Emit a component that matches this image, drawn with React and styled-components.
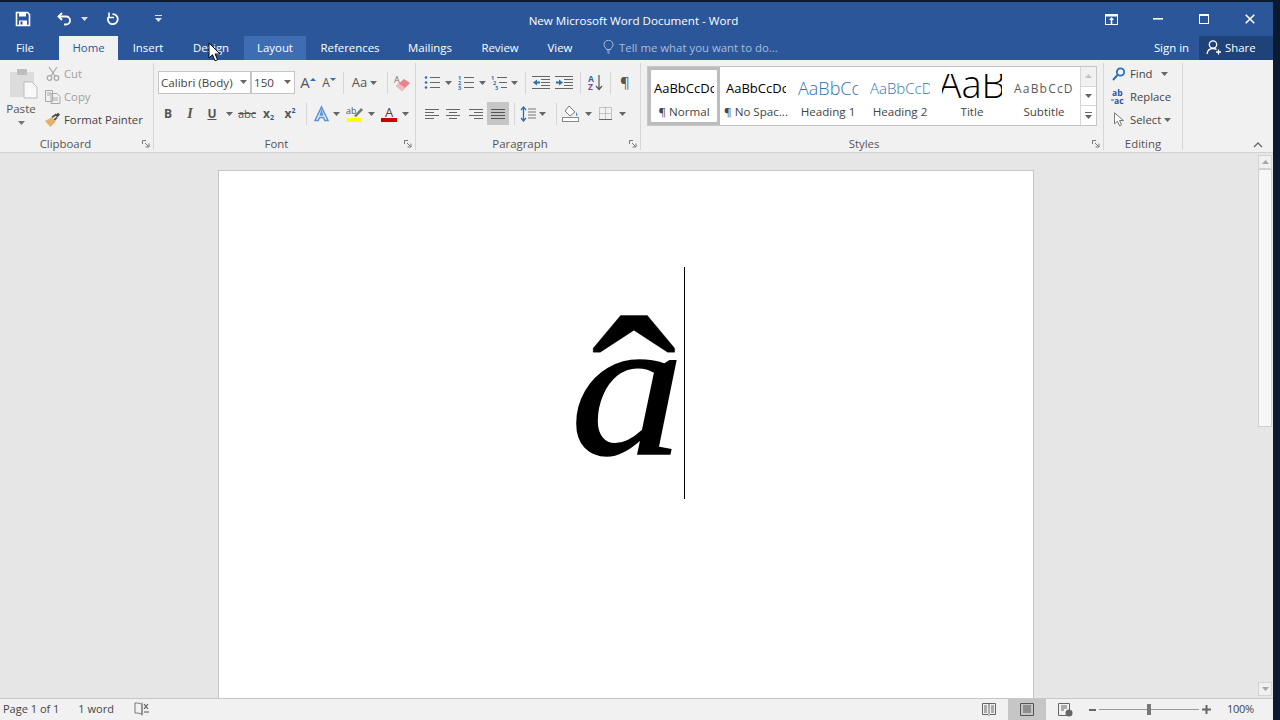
import React from "react";
import styled, { createGlobalStyle } from "styled-components";

const Global = createGlobalStyle`
  html, body { margin: 0; padding: 0; height: 100%; background: #0b1a30; overflow: hidden; }
  body { font-family: "Open Sans", "Liberation Sans", sans-serif; }
`;

const Frame = styled.div`
  position: relative;
  width: 1273px;
  height: 720px;
  padding-top: 2px;
  box-sizing: border-box;
  display: flex;
  flex-direction: column;
`;

const TitleBar = styled.div`
  height: 34px;
  flex: none;
  background: #2b579a;
  display: flex;
  align-items: center;
  color: #fff;
`;

const QuickCell = styled.div`
  width: ${(p) => p.$w}px;
  margin-left: ${(p) => p.$ml || 0}px;
  display: flex;
  justify-content: center;
  align-items: center;
  height: 32px;
`;

const Title = styled.div`
  position: absolute;
  left: 0;
  width: 1267px;
  top: 13px;
  text-align: center;
  font-size: 11.6px;
  line-height: 16px;
  color: #fff;
`;

const WinControls = styled.div`
  margin-left: auto;
  display: flex;
  align-items: center;
`;

const TabBar = styled.div`
  height: 24px;
  flex: none;
  background: #2b579a;
  display: flex;
  align-items: stretch;
  font-size: 11.4px;
  color: #fff;
`;

const Tab = styled.div`
  width: ${(p) => p.$w}px;
  flex: none;
  display: flex;
  justify-content: center;
  align-items: center;
  padding-bottom: 2px;
  box-sizing: border-box;
  background: ${(p) => (p.$active ? "#f1f1f1" : p.$hover ? "#3e6db4" : "transparent")};
  color: ${(p) => (p.$active ? "#2b579a" : "#fff")};
`;

const TellMe = styled.div`
  margin-left: 17px;
  padding-bottom: 2px;
  display: flex;
  align-items: center;
  gap: 5px;
  color: #a9bdd9;
`;

const SignIn = styled.div`
  margin-left: auto;
  display: flex;
  align-items: center;
  padding-right: 10px;
  padding-bottom: 2px;
`;

const Share = styled.div`
  width: 74px;
  display: flex;
  align-items: center;
  gap: 3px;
  padding: 0 0 2px 7px;
  box-sizing: border-box;
  background: #1f4379;
`;

const Ribbon = styled.div`
  height: 93px;
  flex: none;
  box-sizing: border-box;
  background: #f1f1f1;
  border-bottom: 1px solid #d2d2d2;
  padding-top: 3px;
  display: flex;
  align-items: flex-start;
  font-size: 11.3px;
  color: #444;
`;

const Group = styled.section`
  width: ${(p) => p.$w}px;
  height: 87px;
  flex: none;
  box-sizing: border-box;
  border-right: 1px solid #d6d6d6;
  display: flex;
  flex-direction: column;
`;

const GroupBody = styled.div`
  height: 74px;
  flex: none;
  box-sizing: border-box;
  padding: ${(p) => p.$pad || "0"};
  display: ${(p) => (p.$row ? "flex" : "block")};
`;

const GroupFoot = styled.div`
  height: 13px;
  display: flex;
  align-items: center;
  color: #555;
  font-size: 11.4px;
  line-height: 13px;
`;

const GroupLabel = styled.span`
  flex: 1;
  text-align: center;
  padding-right: ${(p) => p.$pr || 0}px;
`;

const Launcher = styled.svg`
  flex: none;
  margin: 0 3px 0 5px;
`;

const ToolRow = styled.div`
  display: flex;
  align-items: center;
  height: 23px;
  margin-top: ${(p) => p.$mt || 0}px;
  margin-left: ${(p) => p.$ml || 0}px;
`;

const Tool = styled.div`
  width: ${(p) => p.$w}px;
  height: 23px;
  flex: none;
  margin-left: ${(p) => p.$ml || 0}px;
  display: flex;
  justify-content: center;
  align-items: center;
  background: ${(p) => (p.$on ? "#c6c6c6" : "transparent")};
`;

const Sep = styled.div`
  width: 1px;
  height: 22px;
  flex: none;
  background: #d6d6d6;
  margin: 0 ${(p) => p.$mr ?? 5}px 0 ${(p) => p.$ml ?? 5}px;
`;

const Combo = styled.div`
  width: ${(p) => p.$w}px;
  height: 23px;
  flex: none;
  box-sizing: border-box;
  background: #fff;
  border: 1px solid #c6c6c6;
  padding: 0 3px 1px 2px;
  display: flex;
  align-items: center;
  justify-content: space-between;
  color: #444;
  font-size: 11.6px;
`;

const GrowA = styled.span`
  font-size: ${(p) => p.$size}px;
  line-height: 1;
  color: #555;
`;

const Fmt = styled.span`
  font-size: 12px;
  font-weight: 700;
  text-decoration: ${(p) => (p.$u ? "underline" : "none")};
  color: #555;
`;

const FmtItalic = styled.span`
  font-family: "Liberation Serif", serif;
  font-size: 14px;
  font-weight: 700;
  font-style: italic;
  color: #555;
`;

const Strike = styled.span`
  font-size: 11px;
  color: #555;
  text-decoration: line-through;
`;

const Script = styled.span`
  font-size: 12px;
  font-weight: 700;
  color: #555;
  small {
    font-size: 7px;
    color: #2b579a;
    vertical-align: ${(p) => (p.$up ? "5px" : "-2px")};
  }
`;

const Paste = styled.div`
  width: 42px;
  display: flex;
  flex-direction: column;
  align-items: center;
  padding-top: 5px;
  color: #555;
  font-size: 11.6px;
  line-height: 15px;
  svg:first-child {
    margin-left: 4px;
  }
  span {
    margin-top: 2px;
  }
  svg:last-child {
    margin-top: 5px;
  }
`;

const ClipList = styled.div`
  margin: -1px 0 0 3px;
`;

const ClipRow = styled.div`
  height: 23px;
  display: flex;
  align-items: center;
  gap: 3px;
  color: ${(p) => (p.$off ? "#a0a0a0" : "#444")};
`;

const IconSlot = styled.div`
  width: 16px;
  display: flex;
  justify-content: center;
`;

const Gallery = styled.div`
  width: 450px;
  height: 60px;
  box-sizing: border-box;
  border: 1px solid #c6c6c6;
  background: #fff;
  display: flex;
`;

const StyleItem = styled.div`
  width: 72px;
  height: 58px;
  flex: none;
  box-sizing: border-box;
  border: ${(p) => (p.$sel ? "3px solid #bcbcbc" : "3px solid transparent")};
  display: flex;
  flex-direction: column;
  align-items: center;
  overflow: hidden;
  padding: 0 3px;
`;

const StyleSample = styled.div`
  height: 34px;
  width: 60px;
  flex: none;
  box-sizing: border-box;
  padding-top: 2px;
  overflow: hidden;
  white-space: nowrap;
  display: flex;
  align-items: center;
  font-size: ${(p) => p.$size}px;
  font-weight: ${(p) => p.$weight || 400};
  letter-spacing: ${(p) => p.$track || 0}px;
  color: ${(p) => p.$color || "#000"};
`;

const TitleSample = styled(StyleSample)`
  height: 30px;
  margin-top: 4px;
  padding-top: 0;
  align-items: flex-start;
  justify-content: center;
  line-height: 18px;
`;

const StyleName = styled.div`
  font-size: 11.6px;
  line-height: 15px;
  white-space: nowrap;
  color: #444;
`;

const GalleryArrows = styled.div`
  margin-left: auto;
  width: 15px;
  border-left: 1px solid #d6d6d6;
  display: flex;
  flex-direction: column;
`;

const GalleryArrow = styled.div`
  flex: 1;
  display: flex;
  justify-content: center;
  align-items: center;
  background: ${(p) => (p.$off ? "#f1f1f1" : "#fff")};
  border-top: ${(p) => (p.$first ? "0" : "1px solid #d6d6d6")};
`;

const EditList = styled.div`
  padding-left: 7px;
  margin-top: -1px;
`;

const EditRow = styled.div`
  height: 23px;
  display: flex;
  align-items: center;
  gap: 3px;
  color: #444;
`;

const Collapse = styled.div`
  align-self: flex-end;
  margin: 0 10px 4px auto;
  display: flex;
`;

const Canvas = styled.div`
  flex: 1;
  min-height: 0;
  display: flex;
  background: #e6e6e6;
  overflow: hidden;
`;

const DocArea = styled.div`
  flex: 1;
  padding: 17px 0 0 218px;
`;

const Page = styled.div`
  width: 816px;
  height: 1056px;
  box-sizing: border-box;
  background: #fff;
  border: 1px solid #c6c6c6;
  padding-top: 96px;
  text-align: center;
`;

const Line = styled.div`
  display: inline-flex;
  height: 232px;
  align-items: flex-start;
`;

const BigLetter = styled.span`
  position: relative;
  display: block;
  width: 111px;
  height: 232px;
  text-align: left;
  font-family: "Liberation Serif", serif;
  color: #000;
`;

const LetterA = styled.span`
  display: block;
  padding-left: 2px;
  font-style: italic;
  font-size: 200px;
  line-height: 240px;
  -webkit-text-stroke: 1.5px #000;
  transform: scaleX(1.14);
  transform-origin: left center;
`;

const Hat = styled.span`
  position: absolute;
  left: 25px;
  top: 14px;
  font-size: 245px;
  line-height: 245px;
  -webkit-text-stroke: 0.4px #000;
  transform: scaleX(1.05);
`;

const CaretBar = styled.span`
  display: block;
  width: 1px;
  height: 232px;
  margin-left: 5px;
  background: #000;
`;

const Scrollbar = styled.div`
  width: 16px;
  flex: none;
  box-sizing: border-box;
  padding: 2px 1px;
  display: flex;
  flex-direction: column;
  align-items: center;
`;

const ScrollBtn = styled.div`
  width: 14px;
  height: 14px;
  flex: none;
  box-sizing: border-box;
  background: #f0f0f0;
  border: 1px solid #d4d4d4;
  display: flex;
  justify-content: center;
  align-items: center;
  margin-top: ${(p) => (p.$end ? "auto" : 0)};
`;

const ScrollThumb = styled.div`
  width: 14px;
  height: 258px;
  flex: none;
  box-sizing: border-box;
  background: #f7f7f7;
  border: 1px solid #cfcfcf;
`;

const StatusBar = styled.div`
  height: 22px;
  flex: none;
  box-sizing: border-box;
  background: #f1f1f1;
  border-top: 1px solid #c6c6c6;
  display: flex;
  align-items: stretch;
  font-size: 11px;
  color: #444;
`;

const StatusText = styled.div`
  display: flex;
  align-items: center;
  padding-bottom: 2px;
  margin-left: ${(p) => p.$ml}px;
`;

const StatusRight = styled.div`
  margin-left: auto;
  display: flex;
  align-items: stretch;
`;

const ViewBtn = styled.div`
  width: 38px;
  display: flex;
  justify-content: center;
  align-items: center;
  background: ${(p) => (p.$on ? "#c6c6c6" : "transparent")};
`;

const ZoomBar = styled.div`
  display: flex;
  align-items: center;
  margin-left: 5px;
  gap: 3px;
`;

const Slider = styled.div`
  position: relative;
  width: 100px;
  height: 1px;
  background: #9a9a9a;
`;

const Knob = styled.div`
  position: absolute;
  left: 48px;
  top: -5px;
  width: 4px;
  height: 11px;
  background: #777;
`;

const ZoomPct = styled.div`
  width: 62px;
  display: flex;
  align-items: center;
  padding: 0 0 2px 16px;
  box-sizing: border-box;
  letter-spacing: -0.3px;
`;

const Pointer = styled.svg`
  position: absolute;
  left: 208px;
  top: 42px;
`;

// small icons
const DownCaret = ({ c = "#666" }) => (
  <svg width="7" height="4" viewBox="0 0 7 4"><path d="M0 0h7L3.5 4z" fill={c} /></svg>
);

const Lines = ({ rows, c = "#666" }) => (
  <svg width="16" height="11" viewBox="0 0 16 11">
    {rows.map(([x, w], i) => (
      <rect key={i} x={x} y={1 + i * 3} width={w} height="1" fill={c} />
    ))}
  </svg>
);

const ListIcon = ({ kind }) => (
  <svg width="16" height="16" viewBox="0 0 16 16">
    {[2, 7, 12].map((y, i) =>
      kind === "bullet" ? (
        <circle key={y} cx="2" cy={y + 0.5} r="1.3" fill="#2b6fb5" />
      ) : (
        <text key={y} x={kind === "multi" ? i * 2 : 0} y={y + 3} fontSize="5.5" fill="#2b6fb5" fontWeight="700">{i + 1}</text>
      )
    )}
    {[2, 7, 12].map((y, i) => (
      <rect key={y} x={kind === "multi" ? 6 + i * 2 : 6} y={y} width={kind === "multi" ? 10 - i * 2 : 10} height="1" fill="#666" />
    ))}
  </svg>
);

const IndentIcon = ({ out }) => (
  <svg width="18" height="14" viewBox="0 0 18 14">
    <rect x="0" y="0" width="18" height="1" fill="#666" />
    <rect x="9" y="3" width="9" height="1" fill="#666" />
    <rect x="9" y="6" width="9" height="1" fill="#666" />
    <rect x="9" y="9" width="9" height="1" fill="#666" />
    <rect x="0" y="12" width="18" height="1" fill="#666" />
    <path d={out ? "M1 6.5 5 3.5v2h3v2H5v2z" : "M8 6.5 4 3.5v2H1v2h3v2z"} fill="#2b6fb5" />
  </svg>
);

const Launch = () => (
  <Launcher width="8" height="8" viewBox="0 0 8 8">
    <path d="M.5 4V.5H4M3 3l3.5 3.5M7 3.5V7H3.5" stroke="#777" fill="none" />
  </Launcher>
);

const styleItems = [
  { sample: "AaBbCcDc", size: 13, name: "¶ Normal", sel: true },
  { sample: "AaBbCcDc", size: 13, name: "¶ No Spac..." },
  { sample: "AaBbCc", size: 18, name: "Heading 1", color: "#2e74b5", weight: 300 },
  { sample: "AaBbCcD", size: 15, name: "Heading 2", color: "#2e74b5", weight: 300 },
  { sample: "AaBbCcD", size: 12, name: "Subtitle", color: "#5a5a5a", track: 1.2 },
];

const tabs = [
  ["Insert", 60], ["Design", 66], ["Layout", 62, true], ["References", 88], ["Mailings", 72], ["Review", 68], ["View", 52],
];

const StyleCell = ({ s }) => (
  <StyleItem $sel={s.sel}>
    <StyleSample $size={s.size} $color={s.color} $track={s.track} $weight={s.weight}>
      {s.sample}
    </StyleSample>
    <StyleName>{s.name}</StyleName>
  </StyleItem>
);

export default function App() {
  return (
    <Frame>
      <Global />
      <TitleBar>
        <QuickCell $w={20} $ml={13}>
          <svg width="16" height="16" viewBox="0 0 16 16">
            <path d="M1.5 1.5h11l2 2v11h-13z" fill="none" stroke="#fff" strokeWidth="1.6" />
            <path d="M4 1.5h7v4H4zM4 9.5h8v5H4z" fill="#fff" />
            <rect x="5.5" y="10.5" width="2" height="3" fill="#2b579a" />
          </svg>
        </QuickCell>
        <QuickCell $w={20} $ml={22}>
          <svg width="16" height="14" viewBox="0 0 16 14">
            <path d="M5 1 1.5 4.5 5 8" fill="none" stroke="#fff" strokeWidth="1.8" />
            <path d="M2 4.5h7a4 4 0 0 1 4 4 4 4 0 0 1-4 4H7" fill="none" stroke="#fff" strokeWidth="1.8" />
          </svg>
        </QuickCell>
        <QuickCell $w={8} $ml={5}><DownCaret c="#d9e2ef" /></QuickCell>
        <QuickCell $w={20} $ml={15}>
          <svg width="14" height="14" viewBox="0 0 14 14">
            <path d="M6.5 2.2a5 5 0 1 1-4.3 3" fill="none" stroke="#fff" strokeWidth="1.8" />
            <path d="M3 .5v5h5" fill="none" stroke="#fff" strokeWidth="1.6" />
          </svg>
        </QuickCell>
        <QuickCell $w={10} $ml={30}>
          <svg width="7" height="8" viewBox="0 0 7 8">
            <rect y="0" width="7" height="1" fill="#d9e2ef" />
            <path d="M0 3h7L3.5 7z" fill="#d9e2ef" />
          </svg>
        </QuickCell>
        <Title>New Microsoft Word Document - Word</Title>
        <WinControls>
          <QuickCell $w={46} $ml={-2}>
            <svg width="13" height="11" viewBox="0 0 13 11">
              <rect x=".5" y=".5" width="12" height="10" fill="none" stroke="#fff" />
              <rect x="1" y="1" width="11" height="1.5" fill="#fff" />
              <path d="M6.5 3 9 6H7.3v4H5.7V6H4z" fill="#fff" />
            </svg>
          </QuickCell>
          <QuickCell $w={46} $ml={1}>
            <svg width="10" height="2" viewBox="0 0 10 2"><rect width="10" height="1.6" fill="#fff" /></svg>
          </QuickCell>
          <QuickCell $w={46}>
            <svg width="10" height="10" viewBox="0 0 10 10">
              <rect x=".5" y=".5" width="9" height="9" fill="none" stroke="#fff" />
              <rect width="10" height="2" fill="#fff" />
            </svg>
          </QuickCell>
          <QuickCell $w={46}>
            <svg width="10" height="10" viewBox="0 0 10 10">
              <path d="M.7.7l8.6 8.6M9.3.7.7 9.3" stroke="#fff" strokeWidth="1.6" />
            </svg>
          </QuickCell>
        </WinControls>
      </TitleBar>

      <TabBar>
        <Tab $w={50}>File</Tab>
        <Tab $w={9} />
        <Tab $w={59} $active>Home</Tab>
        {tabs.map(([label, w, hover]) => (
          <Tab key={label} $w={w} $hover={hover}>{label}</Tab>
        ))}
        <TellMe>
          <svg width="11" height="14" viewBox="0 0 11 14">
            <path d="M3.5 9.5C3 7.5 1 7 1 4.7a4.5 4.5 0 0 1 9 0C10 7 8 7.5 7.5 9.5zM4 11h3M4.5 13h2" fill="none" stroke="#a9bdd9" />
          </svg>
          Tell me what you want to do...
        </TellMe>
        <SignIn>Sign in</SignIn>
        <Share>
          <svg width="16" height="15" viewBox="0 0 16 15">
            <circle cx="7" cy="4.5" r="3.7" fill="none" stroke="#fff" strokeWidth="1.3" />
            <path d="M1 14c.5-4 3-5.5 6-5.5 1.5 0 2.5.3 3.5 1M12.5 9.5v5M10 12h5" fill="none" stroke="#fff" strokeWidth="1.3" />
          </svg>
          Share
        </Share>
      </TabBar>

      <Ribbon>
        <Group $w={154}>
          <GroupBody $row>
            <Paste>
              <svg width="32" height="31" viewBox="0 0 32 31">
                <rect x="3" y="4" width="24" height="25" fill="#dcdcdc" />
                <rect x="10" y="1" width="10" height="6" fill="#bdbdbd" />
                <path d="M17 14h8l5 5v11H17z" fill="#f8f8f8" stroke="#bdbdbd" />
              </svg>
              <span>Paste</span>
              <DownCaret c="#777" />
            </Paste>
            <ClipList>
              <ClipRow $off>
                <IconSlot>
                  <svg width="14" height="15" viewBox="0 0 14 15">
                    <path d="M3 1l6 9M11 1 5 10" stroke="#a8a8a8" strokeWidth="1.2" />
                    <circle cx="3.5" cy="12" r="2.3" fill="none" stroke="#a8a8a8" strokeWidth="1.2" />
                    <circle cx="10.5" cy="12" r="2.3" fill="none" stroke="#a8a8a8" strokeWidth="1.2" />
                  </svg>
                </IconSlot>
                Cut
              </ClipRow>
              <ClipRow $off>
                <IconSlot>
                  <svg width="16" height="14" viewBox="0 0 16 14">
                    <path d="M.5.5h7v11h-7zM6 3.5h6l3 3v7H6z" fill="#f1f1f1" stroke="#a8a8a8" />
                    <path d="M8 8h5M8 10h5M2 3h4M2 5h3" stroke="#a8a8a8" />
                  </svg>
                </IconSlot>
                Copy
              </ClipRow>
              <ClipRow>
                <IconSlot>
                  <svg width="18" height="16" viewBox="0 0 18 16">
                    <path d="M0 9l8-4 4 5-6 6z" fill="#e3b26a" />
                    <path d="M8 5l4-3 1.5 1.5M10.5 8l3-3" stroke="#555" strokeWidth="2" fill="none" />
                    <rect x="13" y="0" width="3" height="4" fill="#444" transform="rotate(40 14 2)" />
                  </svg>
                </IconSlot>
                Format Painter
              </ClipRow>
            </ClipList>
          </GroupBody>
          <GroupFoot><GroupLabel $pr={6}>Clipboard</GroupLabel><Launch /></GroupFoot>
        </Group>

        <Group $w={262}>
          <GroupBody $pad="8px 0 0 4px">
            <ToolRow>
              <Combo $w={93}>Calibri (Body)<DownCaret /></Combo>
              <Combo $w={44}>150<DownCaret /></Combo>
              <Tool $w={20} $ml={3}>
                <GrowA $size={15}>A</GrowA>
                <svg width="6" height="12" viewBox="0 0 6 12"><path d="M0 4 3 1l3 3z" fill="#2b6fb5" /></svg>
              </Tool>
              <Tool $w={20} $ml={1}>
                <GrowA $size={12}>A</GrowA>
                <svg width="6" height="12" viewBox="0 0 6 12"><path d="M0 1h6L3 4z" fill="#2b6fb5" /></svg>
              </Tool>
              <Sep $ml={4} $mr={6} />
              <Tool $w={29}>
                <GrowA $size={13}>Aa</GrowA>&nbsp;<DownCaret />
              </Tool>
              <Sep $ml={8} $mr={5} />
              <Tool $w={18}>
                <svg width="18" height="18" viewBox="0 0 18 18">
                  <path d="M3 12l8-7 6 4-8 8z" fill="#e8848f" />
                  <path d="M3 12l3-2.6 6 4.4L9 17z" fill="#f3b9bf" />
                  <text x="1" y="9" fontSize="9" fill="#777">A</text>
                </svg>
              </Tool>
            </ToolRow>
            <ToolRow $mt={8}>
              <Tool $w={20}><Fmt>B</Fmt></Tool>
              <Tool $w={24}><FmtItalic>I</FmtItalic></Tool>
              <Tool $w={20}><Fmt $u>U</Fmt></Tool>
              <Tool $w={14}><DownCaret /></Tool>
              <Tool $w={22}><Strike>abc</Strike></Tool>
              <Tool $w={21}><Script>x<small>2</small></Script></Tool>
              <Tool $w={22}><Script $up>x<small>2</small></Script></Tool>
              <Sep $ml={5} $mr={0} />
              <Tool $w={20} $ml={4}>
                <svg width="17" height="17" viewBox="0 0 17 17">
                  <path d="M8.5 2 15 15.5h-3.2l-1.300-3h-4l-1.300 3H2zM8.5 6.500 7.400 10h2.200z" fill="#eaf2fb" stroke="#5b93d3" strokeWidth="1.5" />
                </svg>
              </Tool>
              <Tool $w={10}><DownCaret /></Tool>
              <Tool $w={20} $ml={4}>
                <svg width="18" height="16" viewBox="0 0 18 16">
                  <text x="0" y="8" fontSize="9" fill="#555">ab</text>
                  <path d="M8 10l7-8 2 2-7 7z" fill="#777" />
                  <rect x="1" y="12" width="15" height="4" fill="#ffff00" />
                </svg>
              </Tool>
              <Tool $w={12}><DownCaret /></Tool>
              <Tool $w={20} $ml={2}>
                <svg width="16" height="16" viewBox="0 0 16 16">
                  <text x="8" y="11" textAnchor="middle" fontSize="13" fill="#444">A</text>
                  <rect x="0" y="12" width="16" height="4" fill="#d00000" />
                </svg>
              </Tool>
              <Tool $w={12}><DownCaret /></Tool>
            </ToolRow>
          </GroupBody>
          <GroupFoot><GroupLabel>Font</GroupLabel><Launch /></GroupFoot>
        </Group>

        <Group $w={225}>
          <GroupBody $pad="8px 0 0 7px">
            <ToolRow $ml={1}>
              <Tool $w={16}><ListIcon kind="bullet" /></Tool>
              <Tool $w={16}><DownCaret /></Tool>
              <Tool $w={19}><ListIcon kind="num" /></Tool>
              <Tool $w={14}><DownCaret /></Tool>
              <Tool $w={20}><ListIcon kind="multi" /></Tool>
              <Tool $w={10}><DownCaret /></Tool>
              <Sep $ml={6} $mr={5} />
              <Tool $w={20}><IndentIcon out /></Tool>
              <Tool $w={26}><IndentIcon /></Tool>
              <Sep $ml={3} $mr={4} />
              <Tool $w={20}>
                <svg width="15" height="17" viewBox="0 0 15 17">
                  <text x="0" y="8" fontSize="8.5" fontWeight="700" fill="#2b6fb5">A</text>
                  <text x="0" y="16" fontSize="8.5" fontWeight="700" fill="#7a4fa0">Z</text>
                  <path d="M11 1v14M8 12l3 3.5 3-3.5" stroke="#555" fill="none" strokeWidth="1.2" />
                </svg>
              </Tool>
              <Sep $ml={5} $mr={4} />
              <Tool $w={20}><GrowA $size={15}>¶</GrowA></Tool>
            </ToolRow>
            <ToolRow $mt={8}>
              <Tool $w={17}><Lines rows={[[1, 14], [1, 9], [1, 14], [1, 9]]} /></Tool>
              <Tool $w={22} $ml={2}><Lines rows={[[1, 14], [4, 8], [1, 14], [4, 8]]} /></Tool>
              <Tool $w={23}><Lines rows={[[1, 14], [6, 9], [1, 14], [6, 9]]} /></Tool>
              <Tool $w={22} $on><Lines rows={[[1, 14], [1, 14], [1, 14], [1, 14]]} c="#555" /></Tool>
              <Sep $ml={5} $mr={4} />
              <Tool $w={18}>
                <svg width="16" height="16" viewBox="0 0 16 16">
                  <path d="M3.5 1v14M1 4l2.5-3L6 4M1 12l2.5 3L6 12" fill="none" stroke="#2b6fb5" strokeWidth="1.3" />
                  <path d="M8 3h8M8 6h8M8 9h8M8 12h8" stroke="#777" />
                </svg>
              </Tool>
              <Tool $w={10}><DownCaret /></Tool>
              <Sep $ml={9} $mr={5} />
              <Tool $w={18}>
                <svg width="18" height="17" viewBox="0 0 18 17">
                  <path d="M7 1l6 6-5 4-5-5z" fill="#fff" stroke="#777" />
                  <path d="M14 7c1 2 2 3 1 4-1 0-1-2-1-4z" fill="#2b6fb5" />
                  <rect x=".5" y="12.5" width="16" height="4" fill="#fff" stroke="#888" />
                </svg>
              </Tool>
              <Tool $w={16}><DownCaret /></Tool>
              <Tool $w={19}>
                <svg width="13" height="13" viewBox="0 0 13 13">
                  <path d="M.5.5h12v12H.5zM6.5.5v12M.5 6.5h12" fill="none" stroke="#999" strokeDasharray="1 1" />
                  <path d="M0 12.5h13" stroke="#666" />
                </svg>
              </Tool>
              <Tool $w={14}><DownCaret /></Tool>
            </ToolRow>
          </GroupBody>
          <GroupFoot><GroupLabel>Paragraph</GroupLabel><Launch /></GroupFoot>
        </Group>

        <Group $w={463}>
          <GroupBody $pad="3px 0 0 6px">
            <Gallery>
              {styleItems.slice(0, 4).map((s) => <StyleCell key={s.name} s={s} />)}
              <StyleItem>
                <TitleSample $size={38} $weight={300}>AaB</TitleSample>
                <StyleName>Title</StyleName>
              </StyleItem>
              <StyleCell s={styleItems[4]} />
              <GalleryArrows>
                <GalleryArrow $first $off>
                  <svg width="7" height="4" viewBox="0 0 7 4"><path d="M0 4h7L3.5 0z" fill="#c4c4c4" /></svg>
                </GalleryArrow>
                <GalleryArrow><DownCaret /></GalleryArrow>
                <GalleryArrow>
                  <svg width="7" height="7" viewBox="0 0 7 7">
                    <rect width="7" height="1" fill="#666" />
                    <path d="M0 3h7L3.5 7z" fill="#666" />
                  </svg>
                </GalleryArrow>
              </GalleryArrows>
            </Gallery>
          </GroupBody>
          <GroupFoot><GroupLabel>Styles</GroupLabel><Launch /></GroupFoot>
        </Group>

        <Group $w={79}>
          <GroupBody>
            <EditList>
              <EditRow>
                <IconSlot>
                  <svg width="14" height="14" viewBox="0 0 14 14">
                    <circle cx="8.5" cy="5" r="3.7" fill="none" stroke="#2b6fb5" strokeWidth="1.8" />
                    <path d="M5.5 8 1 13" stroke="#2b6fb5" strokeWidth="2" />
                  </svg>
                </IconSlot>
                Find&nbsp;&nbsp;<DownCaret />
              </EditRow>
              <EditRow>
                <IconSlot>
                  <svg width="16" height="16" viewBox="0 0 16 16">
                    <text x="1" y="7" fontSize="8.5" fill="#2b579a" fontWeight="700">ab</text>
                    <text x="3" y="15" fontSize="8.5" fill="#2b579a" fontWeight="700">ac</text>
                    <path d="M0 11h3" stroke="#2b579a" />
                  </svg>
                </IconSlot>
                Replace
              </EditRow>
              <EditRow>
                <IconSlot>
                  <svg width="12" height="15" viewBox="0 0 12 15">
                    <path d="M1.5.8v11l3-2.5 2 4.5 2-1-2-4.3h4z" fill="#fff" stroke="#777" />
                  </svg>
                </IconSlot>
                Select<DownCaret />
              </EditRow>
            </EditList>
          </GroupBody>
          <GroupFoot><GroupLabel>Editing</GroupLabel></GroupFoot>
        </Group>

        <Collapse>
          <svg width="10" height="6" viewBox="0 0 10 6"><path d="M1 5l4-4 4 4" fill="none" stroke="#666" strokeWidth="1.3" /></svg>
        </Collapse>
      </Ribbon>

      <Canvas>
        <DocArea>
          <Page>
            <Line>
              <BigLetter>
                <LetterA>a</LetterA>
                <Hat>ˆ</Hat>
              </BigLetter>
              <CaretBar />
            </Line>
          </Page>
        </DocArea>
        <Scrollbar>
          <ScrollBtn>
            <svg width="7" height="4" viewBox="0 0 7 4"><path d="M0 4h7L3.5 0z" fill="#a6a6a6" /></svg>
          </ScrollBtn>
          <ScrollThumb />
          <ScrollBtn $end><DownCaret c="#a6a6a6" /></ScrollBtn>
        </Scrollbar>
      </Canvas>

      <StatusBar>
        <StatusText $ml={3}>Page 1 of 1</StatusText>
        <StatusText $ml={19}>1 word</StatusText>
        <StatusText $ml={20}>
          <svg width="16" height="14" viewBox="0 0 16 14">
            <path d="M8 2.5C6 1 3 1 1 1v10c2 0 5 0 7 1.5v-9.500M8 .5v13" fill="none" stroke="#777" />
            <path d="M10 2l4 5M14 2l-4 5M10 10h5" stroke="#555" strokeWidth="1.2" />
          </svg>
        </StatusText>
        <StatusRight>
          <ViewBtn>
            <svg width="14" height="13" viewBox="0 0 14 13">
              <path d="M.5.5h13v11H8l-1 1-1-1H.5zM7 1v10M2 3h3M2 5h3M2 7h3M2 9h3M9 3h3M9 5h3M9 7h3M9 9h3" fill="none" stroke="#666" />
            </svg>
          </ViewBtn>
          <ViewBtn $on>
            <svg width="14" height="13" viewBox="0 0 14 13">
              <path d="M.5.5h13v12H.5zM3 3h8M3 5h8M3 7h8M3 9h8" fill="none" stroke="#555" />
            </svg>
          </ViewBtn>
          <ViewBtn>
            <svg width="15" height="14" viewBox="0 0 15 14">
              <path d="M.5.5h11v12H.5zM3 3h6M3 5h6M3 7h3" fill="none" stroke="#666" />
              <circle cx="11" cy="10" r="3.5" fill="#666" />
            </svg>
          </ViewBtn>
          <ZoomBar>
            <svg width="7" height="2" viewBox="0 0 7 2"><rect width="7" height="2" fill="#666" /></svg>
            <Slider><Knob /></Slider>
            <svg width="9" height="9" viewBox="0 0 9 9"><path d="M0 3.5h9v2H0zM3.5 0h2v9h-2z" fill="#666" /></svg>
          </ZoomBar>
          <ZoomPct>100%</ZoomPct>
        </StatusRight>
      </StatusBar>

      <Pointer width="13" height="20" viewBox="0 0 13 20">
        <path d="M1 1v15l3.5-3.2 2.5 6 2.6-1.1-2.5-5.7H12z" fill="#fff" stroke="#000" />
      </Pointer>
    </Frame>
  );
}
